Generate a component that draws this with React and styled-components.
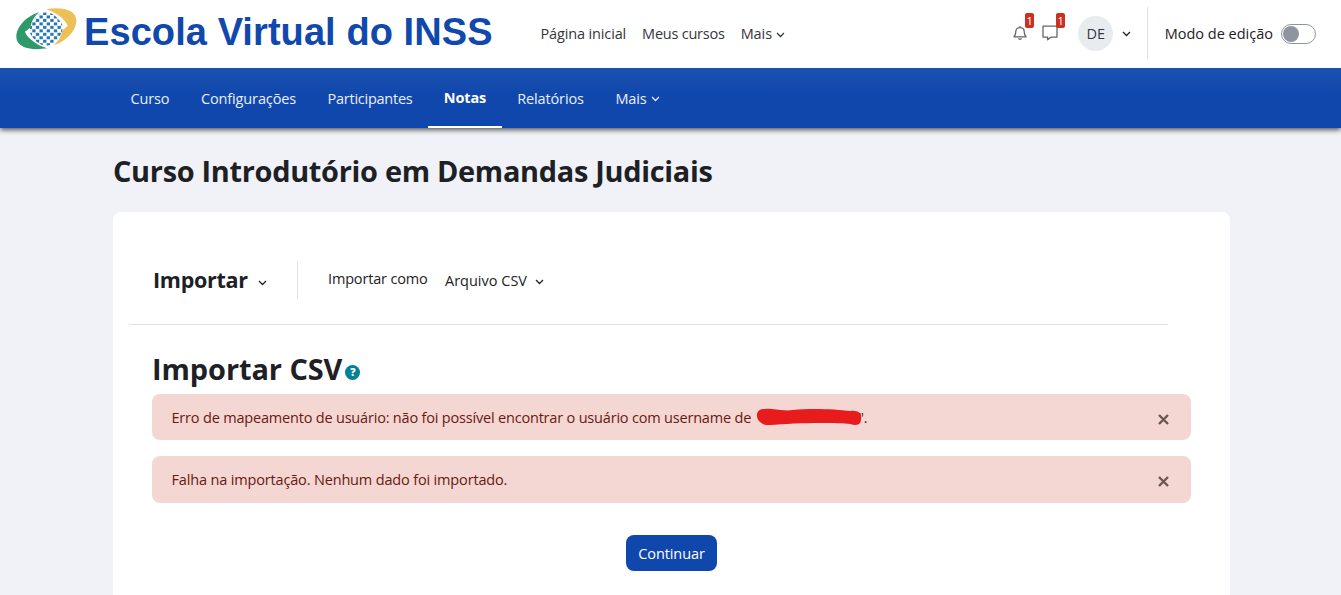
import React from "react";
import styled, { createGlobalStyle } from "styled-components";

const GlobalStyle = createGlobalStyle`
  * { box-sizing: border-box; }
  body {
    margin: 0;
    height: 595px;
    overflow: hidden;
    background: #f0f2f7;
    color: #1d2125;
    font: 400 14.5px/22px "Open Sans", "Noto Sans", sans-serif;
  }
  h1, h2, h3, p { margin: 0; }
  button { font: inherit; }
`;

const Page = styled.div`
  display: flex;
  flex-direction: column;
  height: 595px;
`;

const TopBar = styled.header`
  position: relative;
  z-index: 1;
  display: flex;
  align-items: center;
  flex: none;
  height: 68px;
  padding: 0 25px 0 16px;
  background: #fff;
`;

const Brand = styled.div`
  display: flex;
  align-items: flex-start;
  width: 524.5px;
  height: 68px;
  padding-top: 8px;
`;

const BrandMark = styled.svg`
  width: 61px;
  height: 42px;
`;

const BrandName = styled.span`
  margin: 2px 0 0 7px;
  color: #1148ad;
  font: 700 38px/44px "Liberation Sans", Arial, sans-serif;
  letter-spacing: 0.08px;
  white-space: nowrap;
`;

const PrimaryNav = styled.nav`
  display: flex;
  gap: 16px;
`;

const PrimaryLink = styled.a`
  display: flex;
  align-items: center;
  color: #33373b;
  letter-spacing: ${(p) => p.$tracking || "-0.06px"};
  white-space: nowrap;
`;

const Chevron = styled.svg`
  flex: none;
  width: 9px;
  height: 6px;
  margin-left: ${(p) => p.$gap || 4}px;
  margin-top: ${(p) => p.$drop || 1}px;
  fill: none;
  stroke: currentColor;
  stroke-width: 1.25;
`;

const UserTools = styled.div`
  display: flex;
  align-items: center;
  height: 66px;
  margin: 0 0 2px auto;
`;

const ToolIcon = styled.span`
  position: relative;
  display: flex;
  width: 16px;
  height: 16px;
  margin-right: ${(p) => p.$after}px;
  color: #62676c;

  svg {
    width: 16px;
    height: 16px;
    fill: none;
    stroke: currentColor;
    stroke-width: 1.3;
    stroke-linejoin: round;
  }
`;

const Count = styled.span`
  position: absolute;
  top: -12px;
  left: ${(p) => p.$left}px;
  width: 9px;
  height: 15px;
  border-radius: 2px;
  background: #ca3120;
  color: #fff;
  font-size: 11px;
  line-height: 15px;
  text-align: center;
`;

const Avatar = styled.span`
  width: 35px;
  height: 35px;
  border-radius: 50%;
  background: #e9ecef;
  color: #343a40;
  line-height: 35px;
  text-align: center;
`;

const EditMode = styled.label`
  display: flex;
  align-items: center;
  height: 52px;
  margin-left: 16px;
  padding: 2px 0 0 16.5px;
  border-left: 1px solid #dee2e6;
  white-space: nowrap;
`;

const Switch = styled.span`
  display: flex;
  align-items: center;
  width: 35px;
  height: 20px;
  margin: 0 0 1px 8px;
  padding-left: 1px;
  border: 1px solid #8f959e;
  border-radius: 10px;

  &::before {
    content: "";
    width: 16px;
    height: 16px;
    border-radius: 50%;
    background: #8f959e;
  }
`;

const CourseNav = styled.nav`
  position: relative;
  display: flex;
  flex: none;
  height: 60px;
  padding-left: 115px;
  background: linear-gradient(#1b51af, #1047ac 45%, #1047ac);
  box-shadow: 0 2px 5px rgba(0, 0, 0, 0.65);
`;

const CourseTab = styled.a`
  display: flex;
  align-items: center;
  justify-content: center;
  width: ${(p) => p.$width}px;
  padding-top: ${(p) => (p.$active ? 2 : 1)}px;
  border-bottom: ${(p) => (p.$active ? "2px solid #fff" : "0")};
  color: ${(p) => (p.$active ? "#fff" : "#e9effa")};
  font-weight: ${(p) => (p.$active ? 700 : 400)};
  letter-spacing: ${(p) => p.$tracking || "-0.13px"};
  white-space: nowrap;
`;

const Main = styled.main`
  display: flex;
  flex: 1;
  flex-direction: column;
  width: 1117px;
  margin-left: 113px;
`;

const PageTitle = styled.h1`
  height: 84px;
  padding-top: 23px;
  font-size: 28.9px;
  line-height: 40px;
  letter-spacing: -0.29px;
  white-space: nowrap;
`;

const Card = styled.section`
  flex: 1;
  padding: 50px 39px 0;
  border-radius: 8px 8px 0 0;
  background: #fff;
`;

const ActionBar = styled.div`
  display: flex;
  align-items: flex-start;
  width: 1039px;
  height: 63px;
  margin-left: -23px;
  padding-left: 23px;
  border-bottom: 1px solid #dee2e6;
`;

const ReportMenu = styled.h3`
  display: flex;
  align-items: center;
  width: 146px;
  height: 37px;
  padding: 0 0 2px 1px;
  border-right: 1px solid #dee2e6;
  font-size: 21.5px;
  letter-spacing: -0.28px;
`;

const FormatLabel = styled.span`
  width: 117px;
  margin-left: 30px;
  padding-top: 6px;
  letter-spacing: -0.16px;
  white-space: nowrap;
`;

const FormatSelect = styled.span`
  display: flex;
  align-items: center;
  padding-top: 8px;
`;

const SectionTitle = styled.h2`
  display: flex;
  align-items: center;
  height: 69px;
  padding-top: 19px;
  font-size: 28.9px;
  line-height: 40px;
  letter-spacing: -0.05px;
`;

const Help = styled.span`
  width: 15px;
  height: 15px;
  margin: 7px 0 0 3px;
  border-radius: 50%;
  background: #008196;
  color: #fff;
  font-size: 10.5px;
  line-height: 15px;
  text-align: center;
`;

const Alert = styled.div`
  display: flex;
  align-items: center;
  width: 1039px;
  height: ${(p) => p.$height}px;
  margin-bottom: ${(p) => p.$after}px;
  padding: 1px 22px 0 19.5px;
  border-radius: 8px;
  background: #f4d6d2;
  color: #691911;
  letter-spacing: ${(p) => p.$tracking};
  white-space: nowrap;
`;

const Redaction = styled.svg`
  position: relative;
  width: 107px;
  height: 18px;
  margin: -2px -4.5px 0 4.5px;
`;

const Close = styled.svg`
  width: 11px;
  height: 11px;
  margin: 3px 0 0 auto;
  fill: none;
  stroke: #6d5654;
  stroke-width: 2.4;
`;

const Actions = styled.div`
  display: flex;
  justify-content: center;
  width: 1039px;
`;

const ContinueButton = styled.button`
  width: 91px;
  height: 36px;
  padding: 1px 0 0;
  border: 0;
  border-radius: 8px;
  background: #0f47ad;
  color: #fff;
  letter-spacing: -0.1px;
`;

const tiles = [];
for (let row = 0; row < 10; row += 1) {
  for (let col = 0; col < 10; col += 1) {
    if ((row + col) % 2 === 0) tiles.push([86 + col * 10.8, 36 + row * 10.4]);
  }
}

const Logo = () => (
  <BrandMark viewBox="48 24 183 126" aria-hidden="true">
    <clipPath id="globe">
      <path d="M138 37C158 37 176 55 189 78C188 105 165 137 140 137C120 137 100 120 88 95C90 65 112 37 138 37Z" />
    </clipPath>
    <g clipPath="url(#globe)" fill="#2878b5">
      {tiles.map(([x, y]) => (
        <rect key={`${x}-${y}`} x={x} y={y} width="10" height="9" />
      ))}
    </g>
    <path fill="#ecc056" d="M138 27C190 19 229 31 229 61C229 95 195 126 161 136C179 119 185 105 186 92L203 78C200 65 175 39 138 27Z" />
    <path fill="#2f9a69" d="M142 145C88 153 49 141 49 111C49 78 83 47 117 37C99 54 93 68 92 82L75 95C78 108 105 134 142 145Z" />
  </BrandMark>
);

const Caret = (props) => (
  <Chevron viewBox="0 0 9 6" {...props}>
    <path d="M1 1L4.5 4.5L8 1" />
  </Chevron>
);

const CloseMark = () => (
  <Close viewBox="0 0 11 11" role="img" aria-label="Fechar">
    <path d="M1 1L10 10M10 1L1 10" />
  </Close>
);

export default function App() {
  return (
    <Page>
      <GlobalStyle />
      <TopBar>
        <Brand>
          <Logo />
          <BrandName>Escola Virtual do INSS</BrandName>
        </Brand>
        <PrimaryNav>
          <PrimaryLink $tracking="-0.14px">Página inicial</PrimaryLink>
          <PrimaryLink $tracking="-0.23px">Meus cursos</PrimaryLink>
          <PrimaryLink>Mais<Caret /></PrimaryLink>
        </PrimaryNav>
        <UserTools>
          <ToolIcon $after={14}>
            <svg viewBox="0 0 16 16">
              <path d="M2 11.8C3.6 10.3 3.8 8.8 3.8 6.6C3.8 4.2 5.6 2.6 8 2.6S12.2 4.2 12.2 6.6C12.2 8.8 12.4 10.3 14 11.8ZM8 2.6V1M6.5 13.4C6.8 14.7 9.2 14.7 9.5 13.4" />
            </svg>
            <Count $left={13}>1</Count>
          </ToolIcon>
          <ToolIcon $after={20}>
            <svg viewBox="0 0 16 16">
              <path d="M1 1.1H15V12.1H9.2L5.6 14.8V12.1H1Z" />
            </svg>
            <Count $left={14}>1</Count>
          </ToolIcon>
          <Avatar>DE</Avatar>
          <Caret $gap={9} />
          <EditMode>Modo de edição<Switch /></EditMode>
        </UserTools>
      </TopBar>
      <CourseNav>
        <CourseTab $width={70}>Curso</CourseTab>
        <CourseTab $width={127}>Configurações</CourseTab>
        <CourseTab $width={116} $tracking="-0.25px">Participantes</CourseTab>
        <CourseTab $width={74} $active>Notas</CourseTab>
        <CourseTab $width={97}>Relatórios</CourseTab>
        <CourseTab $width={77}>Mais<Caret /></CourseTab>
      </CourseNav>
      <Main>
        <PageTitle>Curso Introdutório em Demandas Judiciais</PageTitle>
        <Card>
          <ActionBar>
            <ReportMenu>Importar<Caret $gap={10} $drop={6} /></ReportMenu>
            <FormatLabel>Importar como</FormatLabel>
            <FormatSelect>Arquivo CSV<Caret $gap={8} /></FormatSelect>
          </ActionBar>
          <SectionTitle>Importar CSV<Help><b>?</b></Help></SectionTitle>
          <Alert $height={46} $after={16} $tracking="-0.19px">
            Erro de mapeamento de usuário: não foi possível encontrar o usuário com username de
            <Redaction viewBox="0 0 107 18">
              <path fill="#e81c1c" d="M1 6C2 1 8 0 16 1C25 2 31 3 37 2C54 0 80 1 94 3C103 2 106 6 105 11C105 17 101 18 94 16C78 14 34 15 14 17C6 18 0 12 1 6Z" />
            </Redaction>
            ".
            <CloseMark />
          </Alert>
          <Alert $height={47} $after={32} $tracking="-0.16px">
            Falha na importação. Nenhum dado foi importado.
            <CloseMark />
          </Alert>
          <Actions>
            <ContinueButton>Continuar</ContinueButton>
          </Actions>
        </Card>
      </Main>
    </Page>
  );
}
